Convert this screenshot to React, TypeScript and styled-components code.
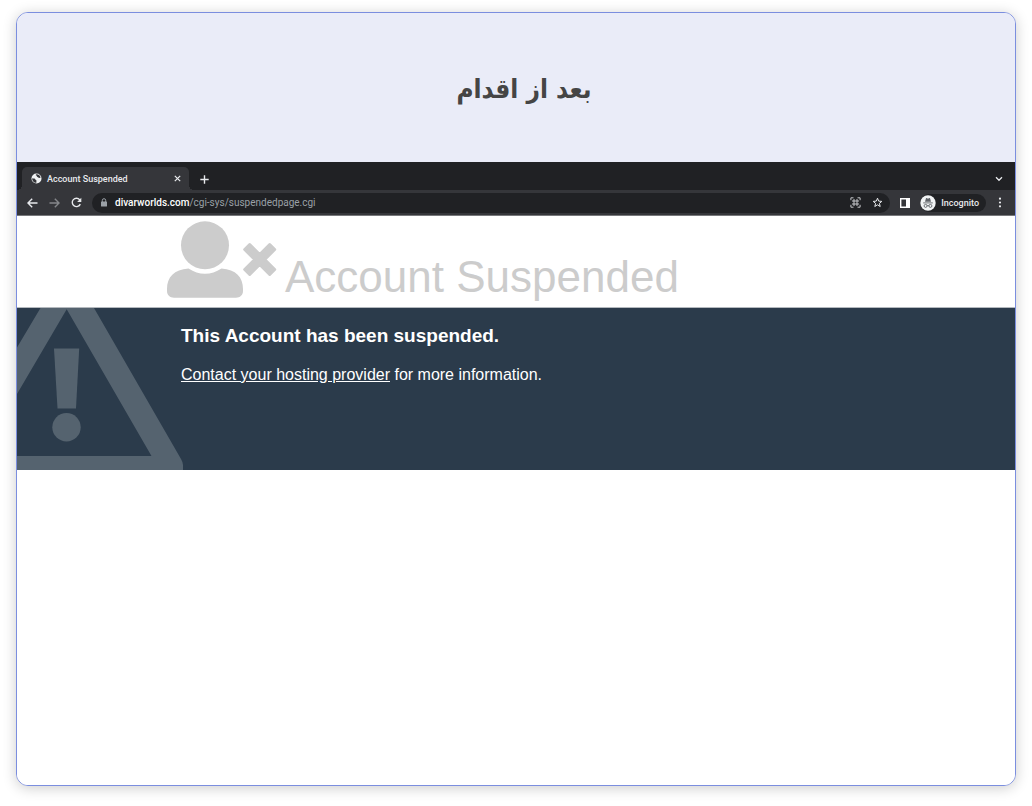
import React from "react";
import styled, { createGlobalStyle } from "styled-components";

const GlobalStyle = createGlobalStyle`
  *, *::before, *::after { box-sizing: border-box; }
  body { margin: 0; background: #ffffff; }
  button { border: 0; padding: 0; background: none; color: inherit; font: inherit; cursor: pointer; }
  svg { display: block; flex: none; }
`;

const Card = styled.article`
  margin: 12px 16px 20px;
  border: 1px solid #7b8edf;
  border-radius: 12px;
  overflow: hidden;
  background: #ffffff;
  box-shadow: 0 2px 14px rgba(0, 0, 0, 0.2);
`;

const CardHeader = styled.header`
  display: flex;
  align-items: center;
  justify-content: center;
  padding: 54px 16px 50px;
  background: #eaecf8;
`;

const CardTitle = styled.h2`
  margin: 0;
  padding-left: 16px;
  font: bold 26px/45px "DejaVu Sans Condensed", "DejaVu Sans", sans-serif;
  color: #454545;
`;

const Browser = styled.section`
  font-family: Roboto, sans-serif;
  color: #e8eaed;
`;

const TabStrip = styled.div`
  display: flex;
  align-items: flex-end;
  height: 28px;
  padding: 0 10px 0 5px;
  background: #202124;
`;

const Tab = styled.div`
  position: relative;
  display: flex;
  align-items: center;
  width: 167px;
  height: 23px;
  padding: 0 6px 0 9px;
  border-radius: 5px 5px 0 0;
  background: #35363a;

  &::before,
  &::after {
    content: "";
    position: absolute;
    bottom: 0;
    width: 5px;
    height: 5px;
  }
  &::before {
    right: 100%;
    background: radial-gradient(circle at 0 0, transparent 5px, #35363a 5px);
  }
  &::after {
    left: 100%;
    background: radial-gradient(circle at 100% 0, transparent 5px, #35363a 5px);
  }
`;

const TabTitle = styled.span`
  flex: 1;
  padding-left: 5px;
  font-size: 9px;
  line-height: 12px;
  font-weight: 500;
  white-space: nowrap;
`;

const IconButton = styled.button<{ $width?: number; $dim?: boolean }>`
  display: flex;
  align-items: center;
  justify-content: center;
  flex: none;
  width: ${(p) => p.$width ?? 22}px;
  height: 22px;
  color: ${(p) => (p.$dim ? "#85878a" : "#e8eaed")};
`;

const Spacer = styled.div`
  flex: 1;
`;

const Toolbar = styled.div`
  display: flex;
  align-items: center;
  height: 26px;
  padding: 0 4px;
  background: #35363a;
  border-bottom: 1px solid #77787b;
`;

const AddressBar = styled.div`
  display: flex;
  flex: 1;
  align-items: center;
  min-width: 0;
  height: 20px;
  margin: 0 4px 0 5px;
  padding: 0 2px 0 8px;
  border-radius: 10px;
  background: #202124;
`;

const Address = styled.button`
  flex: 1;
  min-width: 0;
  overflow: hidden;
  padding-left: 7px;
  font-size: 10px;
  line-height: 14px;
  text-align: left;
  white-space: nowrap;
  color: #9aa0a6;
`;

const Host = styled.span`
  font-weight: 500;
  color: #ffffff;
`;

const Profile = styled.button`
  display: flex;
  align-items: center;
  gap: 5px;
  height: 18px;
  margin: 0 3px 0 4px;
  padding: 0 7px 0 0;
  border-radius: 9px;
  background: #202124;
  font-size: 9px;
  line-height: 12px;
  font-weight: 500;
`;

const Page = styled.div`
  padding-bottom: 315px;
  background: #ffffff;
  font-family: "Liberation Sans", Arial, sans-serif;
`;

const PageHeader = styled.header`
  display: flex;
  align-items: flex-end;
  gap: 8px;
  height: 92px;
  padding: 0 16px 8px 150px;
  border-bottom: 1px solid #b4b9be;
`;

const PageTitle = styled.h1`
  margin: 0;
  font-size: 44px;
  line-height: 44px;
  font-weight: 400;
  color: #cccccc;
`;

const Notice = styled.section`
  display: flex;
  min-height: 162px;
  background: #2b3b4b;
  color: #ffffff;
`;

const NoticeBody = styled.div`
  padding: 16px 16px 16px 164px;
  margin-left: -166px;
`;

const NoticeTitle = styled.h3`
  margin: 0 0 16px;
  font-size: 19px;
  line-height: 24px;
  font-weight: 700;
`;

const NoticeText = styled.p`
  margin: 0;
  font-size: 16px;
  line-height: 22px;
`;

const ProviderLink = styled.a`
  color: inherit;
  text-decoration: underline;
`;

const line = { fill: "none", stroke: "currentColor" } as const;

const Globe = () => (
  <svg width="11" height="11" viewBox="0 0 11 11" aria-hidden="true">
    <circle cx="5.5" cy="5.5" r="5" fill="#f1f3f4" />
    <path d="M1.2 5.2c1.5.2 3 .2 3.1 1.1.1.8 1 .5 1.1 1.3v2.1C2.9 9.7 1 7.8 1.2 5.2z" fill="#35363a" />
    <path d="M5.2 1.3c-.6.6-.7 1 .1 1.3.9.3.1 1.2 1.1 1.3 1 .1 1 .9 1.7 1 .6.1 1-.2 1.5-.1C9.3 2.7 7.7 1.2 5.2 1.3z" fill="#35363a" />
  </svg>
);

const Close = () => (
  <svg width="7" height="7" viewBox="0 0 7 7" aria-hidden="true">
    <path d="M.8.8l5.400 5.400M6.200.8L.8 6.200" {...line} strokeWidth="1.2" />
  </svg>
);

const Plus = () => (
  <svg width="9" height="9" viewBox="0 0 9 9" aria-hidden="true">
    <path d="M4.500.3v8.400M.3 4.500h8.400" {...line} strokeWidth="1.4" />
  </svg>
);

const Chevron = () => (
  <svg width="8" height="6" viewBox="0 0 8 6" aria-hidden="true">
    <path d="M1 1.300l3 3 3-3" {...line} strokeWidth="1.3" />
  </svg>
);

const Arrow = ({ forward = false }: { forward?: boolean }) => (
  <svg width="11" height="10" viewBox="0 0 11 10" aria-hidden="true">
    <path
      d={forward ? "M.5 5h9.300M5.800.8L10 5 5.800 9.200" : "M10.500 5H1.200M5.200.8L1 5l4.200 4.200"}
      {...line}
      strokeWidth="1.4"
    />
  </svg>
);

const Reload = () => (
  <svg width="11" height="11" viewBox="0 0 11 11" aria-hidden="true">
    <path d="M9.300 7.100A4.200 4.200 0 1 1 8.700 2.700L9.600 3.700" {...line} strokeWidth="1.4" />
    <path d="M10.300.7v4.200H6.100z" fill="currentColor" />
  </svg>
);

const Lock = () => (
  <svg width="8" height="9" viewBox="0 0 8 9" aria-hidden="true">
    <path d="M2.300 4V2.400a1.700 1.700 0 0 1 3.400 0V4" fill="none" stroke="#9aa0a6" />
    <rect x="1" y="3.4" width="6" height="5.2" rx=".7" fill="#9aa0a6" />
  </svg>
);

const Command = () => (
  <svg width="11" height="11" viewBox="0 0 11 11" aria-hidden="true">
    <path
      d="M3.500.8H.9v2.400M7.500.8h2.600v2.400M3.500 10.200H.9V7.800M7.500 10.200h2.600V7.800M4 2v7M7 2v7M2 4h7M2 7h7"
      fill="none"
      stroke="#c4c6c9"
    />
  </svg>
);

const Star = () => (
  <svg width="11" height="11" viewBox="0 0 11 11" aria-hidden="true">
    <path d="M5.500 1.200l1.200 2.900 3.100.3-2.400 2 .8 3.100-2.700-1.700-2.700 1.700.8-3.100-2.400-2 3.100-.3z" {...line} />
  </svg>
);

const SidePanel = () => (
  <svg width="10" height="10" viewBox="0 0 10 10" aria-hidden="true">
    <path fillRule="evenodd" d="M0 0h10v10H0zM1.400 1.400v7.200h4.600V1.400z" fill="#ffffff" />
  </svg>
);

const Spy = () => (
  <svg width="16" height="16" viewBox="0 0 16 16" aria-hidden="true">
    <circle cx="8" cy="8" r="7.7" fill="#f1f3f4" />
    <path d="M5 6.800l.9-3.300c.2-.5.6-.5 1-.3.7.3 1.500.3 2.200 0 .4-.2.8-.2 1 .3l.9 3.300z" fill="#5f6368" />
    <path d="M3.200 7.900h9.600" stroke="#5f6368" strokeWidth=".9" />
    <path d="M7 10.800c.7-.4 1.300-.4 2 0" fill="none" stroke="#5f6368" strokeWidth=".8" />
    <circle cx="5.6" cy="10.9" r="1.5" fill="none" stroke="#5f6368" strokeWidth=".9" />
    <circle cx="10.4" cy="10.9" r="1.5" fill="none" stroke="#5f6368" strokeWidth=".9" />
  </svg>
);

const Dots = () => (
  <svg width="4" height="11" viewBox="0 0 4 11" fill="currentColor" aria-hidden="true">
    <circle cx="2" cy="1.7" r="1.1" />
    <circle cx="2" cy="5.5" r="1.1" />
    <circle cx="2" cy="9.3" r="1.1" />
  </svg>
);

const UserRemoved = () => (
  <svg width="110" height="78" viewBox="0 0 110 78" fill="#cccccc" aria-hidden="true">
    <circle cx="38" cy="24.3" r="24" />
    <path d="M21.500 47.500C27 51 32 52.800 38 52.800s11-1.800 16.500-5.300C69 48.500 76 56 76 68v2c0 4-3 6.700-7 6.700H7c-4 0-7-2.700-7-6.700v-2c0-12 7-19.500 21.500-20.500z" />
    <path
      d="M77.700 28.500l5-5 10 10 10-10 5 5-10 10 10 10-5 5-10-10-10 10-5-5 10-10z"
      stroke="#cccccc"
      strokeWidth="3"
      strokeLinejoin="round"
    />
  </svg>
);

const Warning = () => (
  <svg width="166" height="162" viewBox="0 0 166 162" fill="#55636f" aria-hidden="true">
    <path
      fillRule="evenodd"
      d="M0 39.500L23.500 0H77l87 151q2 3.500 2 6v5H0v-14h134.500L49.700 1.200 0 86z"
    />
    <path d="M37 40.500h25.200L59 100.500H40.500z" />
    <circle cx="49.5" cy="119.3" r="14.2" />
  </svg>
);

export default function App() {
  return (
    <>
      <GlobalStyle />
      <Card>
        <CardHeader>
          <CardTitle lang="fa" dir="rtl">بعد از اقدام</CardTitle>
        </CardHeader>
        <Browser>
          <TabStrip>
            <Tab>
              <IconButton as="span" $width={11}><Globe /></IconButton>
              <TabTitle>Account Suspended</TabTitle>
              <IconButton $width={11} aria-label="Close tab"><Close /></IconButton>
            </Tab>
            <IconButton $width={30} aria-label="New tab"><Plus /></IconButton>
            <Spacer />
            <IconButton $width={12} aria-label="Search tabs"><Chevron /></IconButton>
          </TabStrip>
          <Toolbar>
            <IconButton aria-label="Back"><Arrow /></IconButton>
            <IconButton $dim aria-label="Forward"><Arrow forward /></IconButton>
            <IconButton aria-label="Reload"><Reload /></IconButton>
            <AddressBar>
              <Lock />
              <Address aria-label="Address">
                <Host>divarworlds.com</Host>/cgi-sys/suspendedpage.cgi
              </Address>
              <IconButton aria-label="Shortcuts"><Command /></IconButton>
              <IconButton aria-label="Bookmark this page"><Star /></IconButton>
            </AddressBar>
            <IconButton aria-label="Side panel"><SidePanel /></IconButton>
            <Profile><Spy />Incognito</Profile>
            <IconButton aria-label="Menu"><Dots /></IconButton>
          </Toolbar>
          <Page>
            <PageHeader>
              <UserRemoved />
              <PageTitle>Account Suspended</PageTitle>
            </PageHeader>
            <Notice>
              <Warning />
              <NoticeBody>
                <NoticeTitle>This Account has been suspended.</NoticeTitle>
                <NoticeText>
                  <ProviderLink href="#provider">Contact your hosting provider</ProviderLink> for more information.
                </NoticeText>
              </NoticeBody>
            </Notice>
          </Page>
        </Browser>
      </Card>
    </>
  );
}
